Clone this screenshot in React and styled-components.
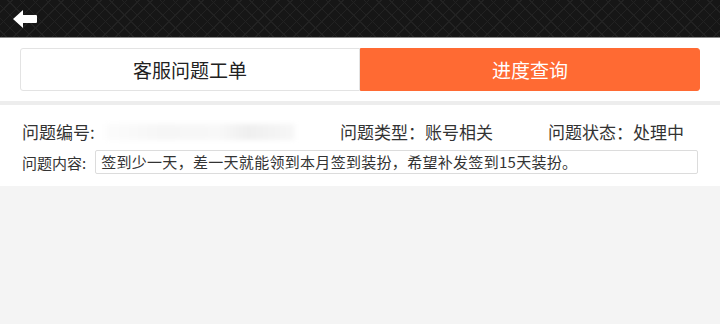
import React from "react";
import styled, { createGlobalStyle } from "styled-components";

const Global = createGlobalStyle`
  html, body {
    margin: 0;
    padding: 0;
    background: #f4f4f4;
    font-family: "Noto Sans CJK SC", "Noto Sans", sans-serif;
    color: #333;
  }
`;

const Page = styled.div`
  width: 720px;
  height: 324px;
  background: #f4f4f4;
  overflow: hidden;
`;

const TopBar = styled.div`
  height: 37px;
  display: flex;
  align-items: center;
  padding-left: 12px;
  background-color: #161616;
  background-image:
    repeating-linear-gradient(45deg, transparent 0 4px, #222 4px 5px, transparent 5px 9px),
    repeating-linear-gradient(-45deg, transparent 0 4px, #222 4px 5px, transparent 5px 9px);
  border-bottom: 1px solid #8a8a8a;
`;

const BackBtn = styled.div`
  width: 26px;
  height: 20px;
  cursor: pointer;
`;

const TabArea = styled.div`
  background: #fff;
  padding: 10px 20px 10px;
  border-bottom: 4px solid #ededed;
`;

const Tabs = styled.div`
  display: flex;
  height: 43px;
`;

const Tab = styled.div`
  flex: 1;
  display: flex;
  align-items: center;
  justify-content: center;
  font-size: 19px;
  color: ${({ active }) => (active ? "#fff" : "#222")};
  background: ${({ active }) => (active ? "#ff6a33" : "#fff")};
  border: 1px solid ${({ active }) => (active ? "#ff6a33" : "#e3e3e3")};
  border-radius: ${({ active }) => (active ? "0 3px 3px 0" : "3px 0 0 3px")};
`;

const Card = styled.div`
  background: #fff;
  padding: 16px 22px 10px 22px;
  height: 55px;
`;

const InfoRow = styled.div`
  display: flex;
  align-items: center;
  font-size: 17px;
  height: 22px;
  line-height: 22px;
`;

const Field = styled.div`
  width: ${({ w }) => w}px;
  white-space: nowrap;
  display: flex;
`;

const Blurred = styled.span`
  display: inline-block;
  margin-left: 10px;
  width: 190px;
  height: 16px;
  margin-top: 3px;
  background: linear-gradient(90deg, #fcfcfc, #f6f6f6 30%, #f8f8f8 60%, #efefef 75%, #f7f7f7);
  filter: blur(2px);
`;

const ContentRow = styled.div`
  display: flex;
  align-items: center;
  margin-top: 7px;
  font-size: 15px;
`;

const ContentBox = styled.div`
  flex: 1;
  height: 22px;
  margin-left: 9px;
  padding-left: 5px;
  border: 1px solid #dcdcdc;
  border-radius: 2px;
  line-height: 22px;
  font-size: 15px;
  letter-spacing: 0.3px;
  color: #333;
`;

export default function App() {
  return (
    <Page>
      <Global />
      <TopBar>
        <BackBtn>
          <svg width="26" height="20" viewBox="0 0 26 20">
            <path d="M1 10 L11 1 L11 6 L24 6 Q25 6 25 7 L25 13 Q25 14 24 14 L11 14 L11 19 Z" fill="#fff" />
          </svg>
        </BackBtn>
      </TopBar>
      <TabArea>
        <Tabs>
          <Tab>客服问题工单</Tab>
          <Tab active>进度查询</Tab>
        </Tabs>
      </TabArea>
      <Card>
        <InfoRow>
          <Field w={318}>
            问题编号:<Blurred />
          </Field>
          <Field w={208}>问题类型：账号相关</Field>
          <Field>问题状态：处理中</Field>
        </InfoRow>
        <ContentRow>
          问题内容:
          <ContentBox>签到少一天，差一天就能领到本月签到装扮，希望补发签到15天装扮。</ContentBox>
        </ContentRow>
      </Card>
    </Page>
  );
}
